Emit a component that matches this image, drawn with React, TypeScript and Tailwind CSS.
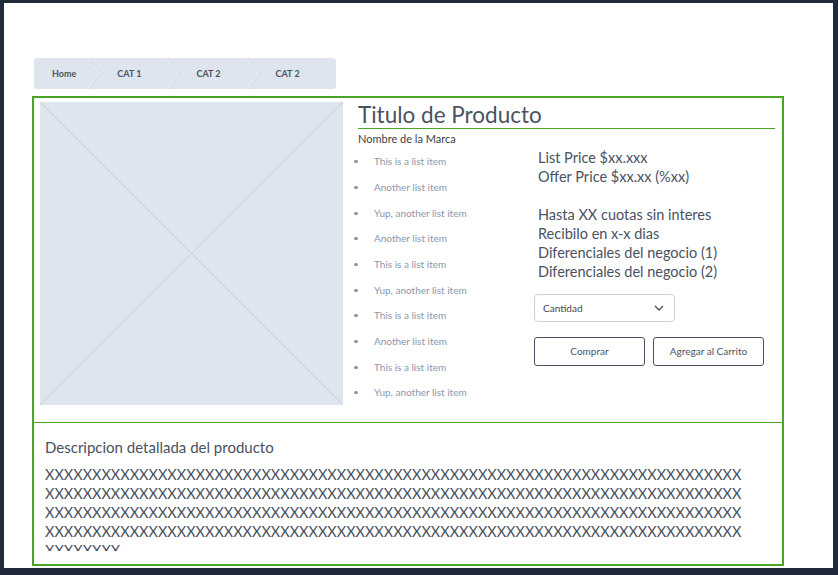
import React from "react";

const crumbs = ["Home", "CAT 1", "CAT 2", "CAT 2"];

const items = [
  "This is a list item",
  "Another list item",
  "Yup, another list item",
  "Another list item",
  "This is a list item",
  "Yup, another list item",
  "This is a list item",
  "Another list item",
  "This is a list item",
  "Yup, another list item",
];

const Separator: React.FC = () => (
  <svg width="14" height="31" viewBox="0 0 14 31" className="shrink-0">
    <path d="M1 0 L13 15.5 L1 31" fill="none" stroke="#c9d1dd" strokeWidth="1" />
    <path d="M0 0 L12 15.5 L0 31" fill="none" stroke="#eef1f6" strokeWidth="1" />
  </svg>
);

const App: React.FC = () => {
  const xs = "X".repeat(400);
  return (
    <div className="w-[838px] h-[575px] bg-[#1f2a3b] pt-[3px] pl-[4px] font-['Lato','Liberation_Sans',sans-serif]">
      <div className="w-[829px] h-[565px] bg-white pt-[55px] pl-[28px]">
        <nav className="flex items-center w-[302px] h-[31px] bg-[#dfe5ee] rounded-[3px] ml-[2px] text-[9px] font-bold text-[#4b5362]">
          <span className="pl-[18px] pr-[12px]">{crumbs[0]}</span>
          <Separator />
          <span className="pl-[15px] pr-[26px]">{crumbs[1]}</span>
          <Separator />
          <span className="pl-[15px] pr-[26px]">{crumbs[2]}</span>
          <Separator />
          <span className="pl-[15px]">{crumbs[3]}</span>
        </nav>

        <div className="mt-[7px] w-[752px] h-[470px] border-2 border-[#4aa526] flex flex-col">
          <div className="flex h-[325px] border-b-[1.5px] border-[#4aa526] pt-[4px] pl-[6px]">
            <div className="relative w-[303px] h-[303px] bg-[#dfe5ee] shrink-0">
              <svg className="absolute inset-0" width="303" height="303" viewBox="0 0 303 303">
                <line x1="0" y1="0" x2="303" y2="303" stroke="#c8cfdb" strokeWidth="1" />
                <line x1="303" y1="0" x2="0" y2="303" stroke="#c8cfdb" strokeWidth="1" />
              </svg>
            </div>

            <div className="ml-[15px] w-[417px] flex flex-col">
              <h1 className="text-[22.5px] leading-[24px] text-[#4a5361] mt-[1px] h-[24px]">Titulo de Producto</h1>
              <div className="h-[1px] bg-[#4aa526] mt-[1px]" />
              <div className="text-[11px] leading-[14px] text-[#3b3f45] mt-[3px]">Nombre de la Marca</div>

              <div className="flex mt-[3px]">
                <ul className="w-[176px] flex flex-col">
                  {items.map((t, i) => (
                    <li key={i} className="flex items-center h-[25.67px] text-[10px] text-[#8c96aa]">
                      <span className="w-[4px] h-[3px] rounded-full bg-[#8a94a8] ml-[-4px] mr-[16px]" />
                      {t}
                    </li>
                  ))}
                </ul>

                <div className="flex flex-col">
                  <div className="text-[14.5px] leading-[19px] text-[#4a5160] pl-[4px] mt-[-1px]">
                    <div>List Price $xx.xxx</div>
                    <div>Offer Price $xx.xx (%xx)</div>
                    <div className="mt-[19px]">Hasta XX cuotas sin interes</div>
                    <div>Recibilo en x-x dias</div>
                    <div>Diferenciales del negocio (1)</div>
                    <div>Diferenciales del negocio (2)</div>
                  </div>

                  <div className="mt-[13px] w-[141px] h-[28px] border border-[#cdd2da] rounded-[4px] flex items-center justify-between pl-[8px] pr-[10px] text-[10px] text-[#3f4550]">
                    <span>Cantidad</span>
                    <svg width="10" height="6" viewBox="0 0 10 6">
                      <path d="M1 1 L5 5 L9 1" fill="none" stroke="#4a5160" strokeWidth="1.3" />
                    </svg>
                  </div>

                  <div className="flex gap-[8px] mt-[15px]">
                    <button className="w-[111px] h-[29px] border-[1.5px] border-[#4a5361] rounded-[3px] text-[10px] text-[#4a5361]">
                      Comprar
                    </button>
                    <button className="w-[111px] h-[29px] border-[1.5px] border-[#4a5361] rounded-[3px] text-[10px] text-[#4a5361]">
                      Agregar al Carrito
                    </button>
                  </div>
                </div>
              </div>
            </div>
          </div>

          <div className="pl-[11px] pt-[14px]">
            <h2 className="text-[15px] leading-[20px] text-[#4a5160]">Descripcion detallada del producto</h2>
            <div className="mt-[8px] w-[700px] text-[14.5px] leading-[19px] text-[#4a5160]">
              <p className="h-[76px] overflow-hidden break-all">{xs}</p>
              <p className="h-[10px] overflow-hidden">XXXXXXXX</p>
            </div>
          </div>
        </div>
      </div>
    </div>
  );
};

export default App;
